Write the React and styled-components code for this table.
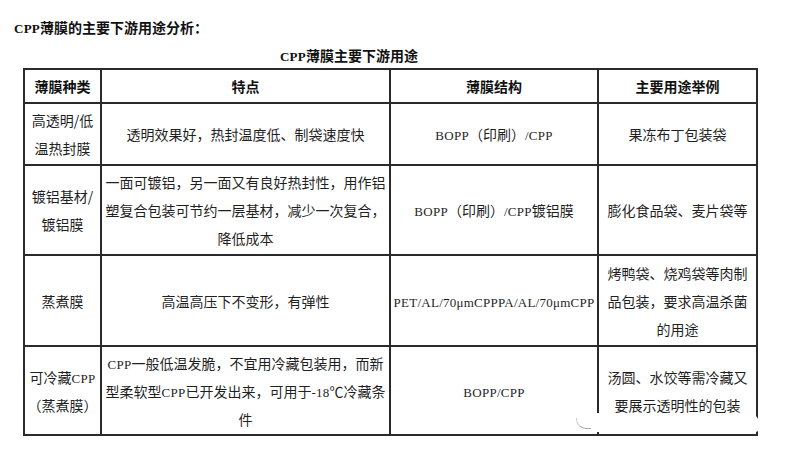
import React from 'react';
import styled, { createGlobalStyle } from 'styled-components';

const GlobalStyle = createGlobalStyle`
  html, body {
    margin: 0;
    padding: 0;
    background: #fff;
  }
  body {
    font-family: "Noto Sans CJK SC", "Liberation Sans", sans-serif;
    color: #1f1f1f;
  }
`;

const Page = styled.div`
  width: 786px;
  height: 452px;
  padding-top: 18px;
  box-sizing: border-box;
  overflow: hidden;
`;

const Title = styled.div`
  height: 18px;
  padding-left: 14px;
  font-size: 14px;
  line-height: 18px;
  font-weight: 700;
  color: #111;
  overflow: hidden;
`;

const Caption = styled.div`
  width: 698px;
  height: 18px;
  margin: 10px 0 4px;
  text-align: center;
  font-size: 14px;
  line-height: 18px;
  font-weight: 700;
  color: #111;
  overflow: hidden;
`;

const Lat = styled.span`
  font-family: "Liberation Serif", serif;
  font-size: 13px;
  letter-spacing: 0.25px;
  font-weight: inherit;
  line-height: 1;
`;

const TableWrap = styled.div`
  position: relative;
  margin-left: 23px;
  width: 735px;
`;

const Table = styled.table`
  border-collapse: separate;
  border-spacing: 0;
  table-layout: fixed;
  width: 735px;
  border-left: 2px solid #2b2b2b;
  border-top: 2px solid #2b2b2b;
`;

const Cell = styled.td`
  box-sizing: border-box;
  width: ${p => p.$w}px;
  height: ${p => p.$h}px;
  padding: 0;
  border-right: 2px solid #2b2b2b;
  border-bottom: 2px solid #2b2b2b;
  text-align: center;
  vertical-align: middle;
  font-size: 14px;
  line-height: 28px;
  white-space: nowrap;
`;

const HeadCell = styled(Cell).attrs({ as: 'th' })`
  font-weight: 700;
  color: #111;
  line-height: 20px;
`;

const Line = styled.div`
  height: 28px;
  line-height: 28px;
`;

const Blot = styled.div`
  position: absolute;
  left: 550px;
  top: 345px;
  width: 186px;
  height: 19px;
  background: #fff;
  border-radius: 6px 10px 4px 12px;

  &::before {
    content: '';
    position: absolute;
    left: 3px;
    top: 5px;
    width: 14px;
    height: 10px;
    border-bottom: 1px solid #aaa;
    border-left: 1px solid #ccc;
    border-radius: 0 0 0 10px;
  }
`;

const widths = [77, 289, 208, 159];
const heads = ['薄膜种类', '特点', '薄膜结构', '主要用途举例'];

const rows = [
  {
    h: 62,
    cells: [
      [['高透明/低'], ['温热封膜']],
      [['透明效果好，热封温度低、制袋速度快']],
      [[<Lat key="a">BOPP</Lat>, '（印刷）', <Lat key="b">/CPP</Lat>]],
      [['果冻布丁包装袋']],
    ],
  },
  {
    h: 90,
    cells: [
      [['镀铝基材/'], ['镀铝膜']],
      [
        ['一面可镀铝，另一面又有良好热封性，用作铝'],
        ['塑复合包装可节约一层基材，减少一次复合，'],
        ['降低成本'],
      ],
      [[<Lat key="a">BOPP</Lat>, '（印刷）', <Lat key="b">/CPP</Lat>, '镀铝膜']],
      [['膨化食品袋、麦片袋等']],
    ],
  },
  {
    h: 91,
    cells: [
      [['蒸煮膜']],
      [['高温高压下不变形，有弹性']],
      [[<Lat key="a">PET/AL/70μmCPPPA/AL/70μmCPP</Lat>]],
      [['烤鸭袋、烧鸡袋等肉制'], ['品包装，要求高温杀菌'], ['的用途']],
    ],
  },
  {
    h: 89,
    cells: [
      [['可冷藏', <Lat key="a">CPP</Lat>], ['（蒸煮膜）']],
      [
        [<Lat key="a">CPP</Lat>, '一般低温发脆，不宜用冷藏包装用，而新'],
        ['型柔软型', <Lat key="b">CPP</Lat>, '已开发出来，可用于', <Lat key="c">-18</Lat>, '℃冷藏条'],
        ['件'],
      ],
      [[<Lat key="a">BOPP/CPP</Lat>]],
      [['汤圆、水饺等需冷藏又'], ['要展示透明性的包装']],
    ],
  },
];

const App = () => (
  <Page>
    <GlobalStyle />
    <Title>
      <Lat>CPP</Lat>薄膜的主要下游用途分析：
    </Title>
    <Caption>
      <Lat>CPP</Lat>薄膜主要下游用途
    </Caption>
    <TableWrap>
      <Table>
        <thead>
          <tr>
            {heads.map((h, i) => (
              <HeadCell key={h} $w={widths[i]} $h={34}>
                {h}
              </HeadCell>
            ))}
          </tr>
        </thead>
        <tbody>
          {rows.map((r, ri) => (
            <tr key={ri}>
              {r.cells.map((lines, ci) => (
                <Cell key={ci} $w={widths[ci]} $h={r.h}>
                  {lines.map((ln, li) => (
                    <Line key={li}>{ln}</Line>
                  ))}
                </Cell>
              ))}
            </tr>
          ))}
        </tbody>
      </Table>
      <Blot />
    </TableWrap>
  </Page>
);

export default App;
